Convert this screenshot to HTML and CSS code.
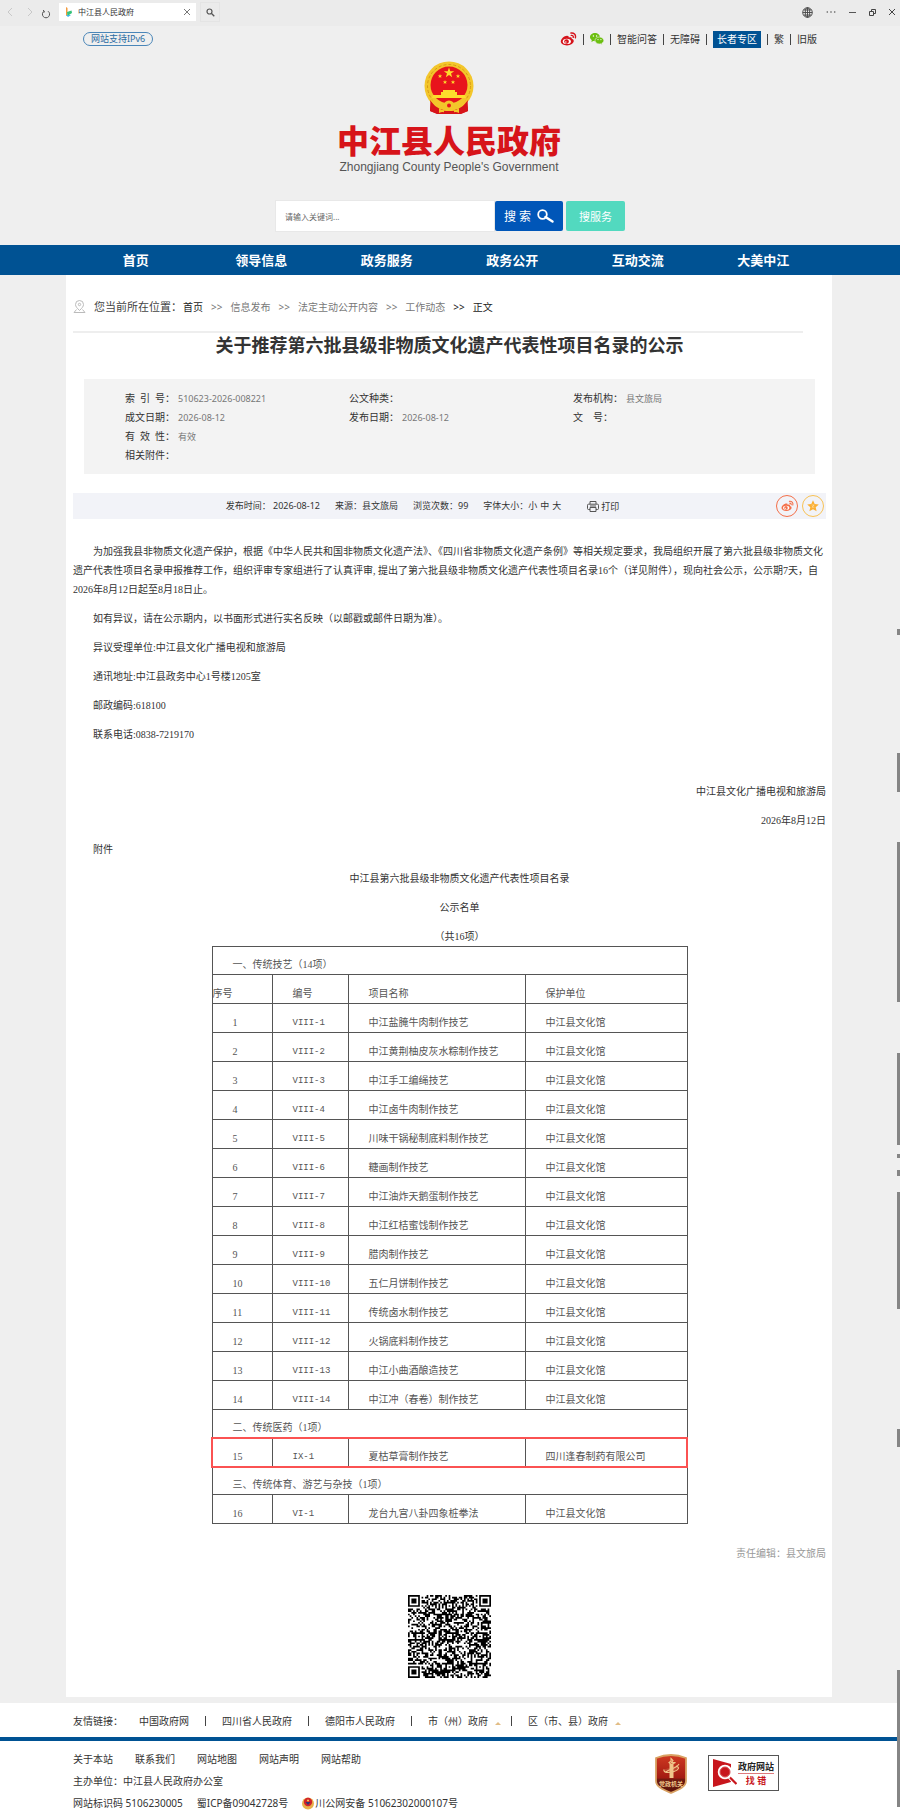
FILE: index.html
```html
<!DOCTYPE html>
<html lang="zh-CN">
<head>
    <meta charset="UTF-8">
    <meta name="viewport" content="width=device-width, initial-scale=1.0">
    <title>中江县人民政府</title>
    <link rel="stylesheet" href="styles.css">
</head>
<body>
    <!-- 公用图标 -->
    <svg class="sprite" aria-hidden="true">
        <symbol id="weibo" viewBox="0 0 24 20">
            <path fill="currentColor" d="M10 5.2C6.500 5 1 9.300 1 13.300 1 17 5.200 19.200 9.800 19.200c5.500 0 9.700-3 9.700-6.200 0-2-1.600-2.800-3-3.200.6-1.800-.3-3.200-4.200-1.800C12.700 6.300 12 5.300 10 5.200z"/>
            <ellipse cx="9.600" cy="13.400" rx="5.800" ry="3.700" fill="#fff"/>
            <circle cx="9.200" cy="13.500" r="3.300" fill="currentColor"/>
            <circle cx="8.200" cy="14.200" r="1" fill="#fff"/>
            <path fill="none" stroke="currentColor" stroke-width="2" stroke-linecap="round" d="M15.500 1.500c4-.8 7.500 2.500 6.300 6.700M16 4.800c2-.3 3.200 1.200 2.800 2.900"/>
        </symbol>
    </svg>

    <div class="browser-bar">
        <button class="bar-btn" aria-label="后退"><svg width="8" height="10" viewBox="0 0 8 10"><path d="M6 1 2 5l4 4" fill="none" stroke="#c8c8c8"/></svg></button>
        <button class="bar-btn" aria-label="前进"><svg width="8" height="10" viewBox="0 0 8 10"><path d="m2 1 4 4-4 4" fill="none" stroke="#c8c8c8"/></svg></button>
        <button class="bar-btn reload" aria-label="刷新"><svg width="10" height="10" viewBox="0 0 10 10"><path d="M3 2.200a3.600 3.600 0 1 0 4 0M2 1.200l1.400 1-.6 1.600" fill="none" stroke="#555"/></svg></button>
        <div class="tab">
            <svg width="8" height="10" viewBox="0 0 8 10"><path d="M1 0 2.500 1v7L1 9z" fill="#f39a3d"/><path d="M2 5 6.500 3.500 7 6 2.500 9z" fill="#35c27a"/><path d="M1 8h5L3 10z" fill="#39b6e8"/></svg>
            <span class="tab-title">中江县人民政府</span>
            <button class="bar-btn" aria-label="关闭标签"><svg width="6" height="6" viewBox="0 0 6 6"><path d="m0 0 6 6M6 0 0 6" stroke="#777"/></svg></button>
        </div>
        <button class="bar-btn tab-search" aria-label="搜索标签"><svg width="9" height="9" viewBox="0 0 9 9"><circle cx="3.500" cy="3.500" r="2.500" fill="none" stroke="#555" stroke-width="1.200"/><path d="m5.300 5.300 3 3" stroke="#555" stroke-width="1.300"/></svg></button>
        <div class="window-btns">
            <button class="bar-btn" aria-label="语言"><svg width="11" height="11" viewBox="0 0 11 11"><g fill="none" stroke="#444" stroke-width=".9"><circle cx="5.500" cy="5.500" r="4.800"/><ellipse cx="5.500" cy="5.500" rx="2.200" ry="4.800"/><path d="M.7 5.500h9.600M1.500 3h8M1.500 8h8M5.500.7v9.600"/></g></svg></button>
            <button class="bar-btn" aria-label="更多"><svg width="10" height="4" viewBox="0 0 10 4"><g fill="#555"><circle cx="1.300" cy="2" r=".8"/><circle cx="5" cy="2" r=".8"/><circle cx="8.700" cy="2" r=".8"/></g></svg></button>
            <button class="bar-btn" aria-label="最小化"><svg width="7" height="7" viewBox="0 0 7 7"><path d="M0 3.500h7" stroke="#555"/></svg></button>
            <button class="bar-btn" aria-label="还原"><svg width="7" height="7" viewBox="0 0 7 7"><path d="M.5 2.500h4v4h-4zM2.500 2V.5h4v4H5" fill="none" stroke="#444"/></svg></button>
            <button class="bar-btn" aria-label="关闭"><svg width="6" height="6" viewBox="0 0 6 6"><path d="m0 0 6 6M6 0 0 6" stroke="#444"/></svg></button>
        </div>
    </div>

    <header class="wrap">
        <div class="top-line">
            <a class="ipv6" href="#">网站支持IPv6</a>
            <div class="top-links">
                <a class="weibo" href="#" aria-label="微博"><svg width="17" height="14"><use href="#weibo"/></svg></a>
                <i></i>
                <a href="#" aria-label="微信"><svg width="14" height="12" viewBox="0 0 14 12"><g fill="#6cbf10"><path d="M5 0C2.200 0 0 1.800 0 4c0 1.300.7 2.400 1.800 3.100L1.400 9l1.900-1c3.800.7 6.600-1.300 6.600-4C9.900 1.800 7.700 0 5 0z"/><path stroke="#efefef" stroke-width=".6" d="M9.300 4C6.900 4 5 5.600 5 7.500S6.900 11 9.300 11l1.200-.2 1.700.9-.4-1.500c1.300-.7 2-1.600 2-2.700C13.800 5.600 11.700 4 9.300 4z"/></g><g fill="#fff"><circle cx="3.400" cy="3" r=".7"/><circle cx="6.600" cy="3" r=".7"/><circle cx="8" cy="6.600" r=".6"/><circle cx="10.900" cy="6.600" r=".6"/></g></svg></a>
                <i></i>
                <a href="#">智能问答</a>
                <i></i>
                <a href="#">无障碍</a>
                <i></i>
                <a class="elder" href="#">长者专区</a>
                <i></i>
                <a href="#">繁</a>
                <i></i>
                <a href="#">旧版</a>
            </div>
        </div>
        <div class="logo">
            <svg width="50" height="54" viewBox="0 0 50 54">
                <path d="M7 38 6 50l7 3h24l7-3-1-12z" fill="#d7141a"/>
                <circle cx="25" cy="25" r="24.500" fill="#f3c62b"/>
                <circle cx="25" cy="25" r="21.500" fill="none" stroke="#d99a15" stroke-width="1" stroke-dasharray="3 2"/>
                <circle cx="25" cy="24" r="18.500" fill="#e8141c"/>
                <path d="m25 6.500 1.300 3.700h3.900L27 12.500l1.200 3.800-3.200-2.300-3.200 2.300 1.200-3.800-3.200-2.300h3.900z" fill="#fddc2c"/>
                <g fill="#fddc2c">
                    <path d="m16 13 .6 1.500h1.600l-1.300 1 .5 1.600-1.400-1-1.400 1 .5-1.600-1.300-1h1.600zM34 13l.6 1.500h1.600l-1.300 1 .5 1.600-1.400-1-1.400 1 .5-1.600-1.300-1h1.600zM21 19l.6 1.500h1.600l-1.300 1 .5 1.600-1.400-1-1.400 1 .5-1.600-1.300-1h1.600zM29 19l.6 1.500h1.600l-1.300 1 .5 1.600-1.400-1-1.400 1 .5-1.600-1.300-1h1.600z"/>
                    <path d="M19 29h12v2h2v3h8l1 3H8l1-3h8v-3h2z"/>
                </g>
                <path d="M6 39c1 3 0 7 0 11l8 3h22l8-3c0-4-1-8 0-11L35 50H15z" fill="#d7141a"/>
                <path d="M10 37c4 7 9 8 15 8s11-1 15-8l2 1c-3 7-8 10-17 10S11 45 8 38z" fill="#f3c62b"/>
                <circle cx="25" cy="45" r="5.500" fill="#f3c62b"/>
                <circle cx="25" cy="44.500" r="2" fill="#e8141c"/>
                <path d="M15 47c3 3 6 2 10 2s7 1 10-2v5c-4-2-6 0-10 0s-6-2-10 0z" fill="#f3c62b"/>
                <path d="M20 51h10" stroke="#d7141a" stroke-width="2"/>
            </svg>
            <h1>中江县人民政府</h1>
            <p>Zhongjiang County People's Government</p>
        </div>
        <form class="search">
            <input type="text" aria-label="关键词" placeholder="请输入关键词...">
            <button type="button" class="search-btn">搜 索
                <svg width="17" height="14" viewBox="0 0 17 14"><circle cx="5.500" cy="5.500" r="4.300" fill="none" stroke="#fff" stroke-width="1.800"/><path d="m8.500 8 7 4.500" stroke="#fff" stroke-width="2.400" stroke-linecap="round"/></svg>
            </button>
            <button type="button" class="service-btn">搜服务</button>
        </form>
    </header>

    <nav class="main-nav">
        <a href="#">首页</a>
        <a href="#">领导信息</a>
        <a href="#">政务服务</a>
        <a href="#">政务公开</a>
        <a href="#">互动交流</a>
        <a href="#">大美中江</a>
    </nav>

    <main class="wrap main">
        <div class="crumb">
            <svg width="13" height="14" viewBox="0 0 13 14"><g fill="none" stroke="#bbb"><path d="M6.500 10.500C4 8 2.500 6.500 2.500 4.500a4 4 0 0 1 8 0c0 2-1.500 3.500-4 6z"/><circle cx="6.500" cy="4.500" r="1.200"/><path d="M3.500 9.500 1 12.500h11l-2.500-3"/></g></svg>
            <span class="crumb-label">您当前所在位置：</span>
            <a class="dark" href="#">首页</a>
            <span>&gt;&gt;</span>
            <a href="#">信息发布</a>
            <span>&gt;&gt;</span>
            <a href="#">法定主动公开内容</a>
            <span>&gt;&gt;</span>
            <a href="#">工作动态</a>
            <span class="dark">&gt;&gt;</span>
            <span class="dark">正文</span>
        </div>
        <h2>关于推荐第六批县级非物质文化遗产代表性项目名录的公示</h2>

        <dl class="meta">
            <div><dt>索&ensp;引&ensp;号：</dt><dd>510623-2026-008221</dd></div>
            <div><dt>公文种类：</dt><dd></dd></div>
            <div><dt>发布机构：</dt><dd>县文旅局</dd></div>
            <div><dt>成文日期：</dt><dd>2026-08-12</dd></div>
            <div><dt>发布日期：</dt><dd>2026-08-12</dd></div>
            <div><dt>文&emsp;号：</dt><dd></dd></div>
            <div class="full"><dt>有&ensp;效&ensp;性：</dt><dd>有效</dd></div>
            <div class="full"><dt>相关附件：</dt><dd></dd></div>
        </dl>

        <div class="tools">
            <div class="tools-info">
                <span>发布时间： 2026-08-12</span>
                <span>来源：县文旅局</span>
                <span>浏览次数：99</span>
                <span class="font-size">字体大小：<a href="#">小</a><a href="#">中</a><a href="#">大</a></span>
                <button class="print"><svg width="12" height="11" viewBox="0 0 12 11"><g fill="none" stroke="#555"><path d="M3 3V.5h6V3M3 8.500H1.500a1 1 0 0 1-1-1V4.200a1 1 0 0 1 1-1h9a1 1 0 0 1 1 1v3.300a1 1 0 0 1-1 1H9"/><path d="M3 6.500h6v4H3zM3 5h6"/></g></svg>打印</button>
            </div>
            <a class="share share-weibo" href="#" aria-label="分享到微博"><svg width="13" height="12"><use href="#weibo"/></svg></a>
            <a class="share share-star" href="#" aria-label="收藏"><svg width="12" height="12" viewBox="0 0 12 12"><path d="m6 .3 1.700 3.800 4.100.4-3.100 2.700.9 4.100L6 9.200l-3.600 2.100.9-4.100L.2 4.500l4.100-.4z" fill="#fbb034"/><path d="M4.500 5h2.700L4.900 7.200h2.500" fill="none" stroke="#fff" stroke-width=".4"/></svg></a>
        </div>

        <article class="article">
            <p>为加强我县非物质文化遗产保护，根据《中华人民共和国非物质文化遗产法》、《四川省非物质文化遗产条例》等相关规定要求，我局组织开展了第六批县级非物质文化遗产代表性项目名录申报推荐工作，组织评审专家组进行了认真评审, 提出了第六批县级非物质文化遗产代表性项目名录16个（详见附件），现向社会公示，公示期7天，自2026年8月12日起至8月18日止。</p>
            <p>如有异议，请在公示期内，以书面形式进行实名反映（以邮戳或邮件日期为准）。</p>
            <p>异议受理单位:中江县文化广播电视和旅游局</p>
            <p>通讯地址:中江县政务中心1号楼1205室</p>
            <p>邮政编码:618100</p>
            <p>联系电话:0838-7219170</p>
            <p class="sign">中江县文化广播电视和旅游局</p>
            <p class="right">2026年8月12日</p>
            <p>附件</p>
            <p class="center">中江县第六批县级非物质文化遗产代表性项目名录</p>
            <p class="center">公示名单</p>
            <p class="center">（共16项）</p>
            <table class="list">
                <colgroup><col class="c-no"><col class="c-code"><col class="c-name"><col class="c-unit"></colgroup>
                <tr class="group"><td colspan="4">一、传统技艺（14项）</td></tr>
                <tr><th class="flush">序号</th><th>编号</th><th>项目名称</th><th>保护单位</th></tr>
                <tr><td>1</td><td class="code">VIII-1</td><td>中江盐腌牛肉制作技艺</td><td>中江县文化馆</td></tr>
                <tr><td>2</td><td class="code">VIII-2</td><td>中江黄荆柚皮灰水粽制作技艺</td><td>中江县文化馆</td></tr>
                <tr><td>3</td><td class="code">VIII-3</td><td>中江手工编绳技艺</td><td>中江县文化馆</td></tr>
                <tr><td>4</td><td class="code">VIII-4</td><td>中江卤牛肉制作技艺</td><td>中江县文化馆</td></tr>
                <tr><td>5</td><td class="code">VIII-5</td><td>川味干锅秘制底料制作技艺</td><td>中江县文化馆</td></tr>
                <tr><td>6</td><td class="code">VIII-6</td><td>糖画制作技艺</td><td>中江县文化馆</td></tr>
                <tr><td>7</td><td class="code">VIII-7</td><td>中江油炸天鹅蛋制作技艺</td><td>中江县文化馆</td></tr>
                <tr><td>8</td><td class="code">VIII-8</td><td>中江红桔蜜饯制作技艺</td><td>中江县文化馆</td></tr>
                <tr><td>9</td><td class="code">VIII-9</td><td>腊肉制作技艺</td><td>中江县文化馆</td></tr>
                <tr><td>10</td><td class="code">VIII-10</td><td>五仁月饼制作技艺</td><td>中江县文化馆</td></tr>
                <tr><td>11</td><td class="code">VIII-11</td><td>传统卤水制作技艺</td><td>中江县文化馆</td></tr>
                <tr><td>12</td><td class="code">VIII-12</td><td>火锅底料制作技艺</td><td>中江县文化馆</td></tr>
                <tr><td>13</td><td class="code">VIII-13</td><td>中江小曲酒酿造技艺</td><td>中江县文化馆</td></tr>
                <tr><td>14</td><td class="code">VIII-14</td><td>中江冲（春卷）制作技艺</td><td>中江县文化馆</td></tr>
                <tr class="group"><td colspan="4">二、传统医药（1项）</td></tr>
                <tr class="marked"><td>15</td><td class="code">IX-1</td><td>夏枯草膏制作技艺</td><td>四川逢春制药有限公司</td></tr>
                <tr class="group"><td colspan="4">三、传统体育、游艺与杂技（1项）</td></tr>
                <tr><td>16</td><td class="code">VI-1</td><td>龙台九宫八卦四象桩拳法</td><td>中江县文化馆</td></tr>
            </table>
        </article>
        <p class="editor">责任编辑：县文旅局</p>
        <svg class="qr" id="qr" viewBox="0 0 49 49" role="img" aria-label="二维码"></svg>
    </main>

    <footer>
        <div class="wrap friend">
            <span>友情链接：</span>
            <a href="#">中国政府网</a><i></i>
            <a href="#">四川省人民政府</a><i></i>
            <a href="#">德阳市人民政府</a><i></i>
            <a class="drop" href="#">市（州）政府</a><i></i>
            <a class="drop" href="#">区（市、县）政府</a>
        </div>
        <div class="foot-line"></div>
        <div class="wrap foot">
            <div class="foot-text">
                <p class="foot-links">
                    <a href="#">关于本站</a>
                    <a href="#">联系我们</a>
                    <a href="#">网站地图</a>
                    <a href="#">网站声明</a>
                    <a href="#">网站帮助</a>
                </p>
                <p>主办单位：中江县人民政府办公室</p>
                <p class="records">
                    <span>网站标识码 5106230005</span>
                    <a href="#">蜀ICP备09042728号</a>
                    <a href="#"><svg width="12" height="13" viewBox="0 0 12 13"><circle cx="6" cy="6.500" r="6" fill="#e8b04a"/><circle cx="6" cy="5" r="4.200" fill="#d2232a"/><path d="M3.500 5h5L6 8z" fill="#2b3a78"/><circle cx="6" cy="3.500" r="1" fill="#fbd34d"/></svg>川公网安备 51062302000107号</a>
                </p>
            </div>
            <a class="shield" href="#">
                <svg width="34" height="40" viewBox="0 0 34 40">
                    <defs><linearGradient id="sh" x2="0" y2="1"><stop stop-color="#d03a22"/><stop offset=".6" stop-color="#a31b12"/><stop offset=".65" stop-color="#6d1a10"/><stop offset="1" stop-color="#5a120b"/></linearGradient></defs>
                    <path d="M17 1c5 0 10 1 15 3v23c0 6-8 9-15 12C10 36 2 33 2 27V4c5-2 10-3 15-3z" fill="url(#sh)" stroke="#d9a263" stroke-width="1.800"/>
                    <path d="M15.500 10h4v14h-4z" fill="#f0c58a"/>
                    <path d="M17 4.500l2 2-1.500 2h4l-4.500 2-2-2 2-1.500zM22 12c4 1 3 4-2 5.500S9 19 10 15.500M25 10c-2 4-9 5-13 8" fill="#f0c58a" stroke="#f0c58a" stroke-width="1.100" fill-opacity=".2"/>
                    <text x="17" y="32" text-anchor="middle" class="shield-text">党政机关</text>
                </svg>
            </a>
            <a class="find-error" href="#">
                <svg width="24" height="28" viewBox="0 0 24 28"><path d="M0 0 18 5v18L0 28z" fill="#c8161d"/><circle cx="12" cy="13" r="6" fill="#c8161d" stroke="#fff" stroke-width="2.500"/><circle cx="12" cy="13" r="5" fill="none" stroke="#c8161d" stroke-width=".8"/><path d="m16.500 18 6.500 7" stroke="#fff" stroke-width="4"/><path d="m17 18.500 6.500 6.500" stroke="#c8161d" stroke-width="2.200"/></svg>
                <span><b>政府网站</b><em>找 错</em></span>
            </a>
        </div>
    </footer>

    <!-- 右侧边缘滚动标记 -->
    <svg class="edge" viewBox="0 0 3 1818" fill="#858585" aria-hidden="true">
        <path d="M0 629h3v6H0zM0 753h3v39H0zM0 842h3v160H0zM0 1053h3v92H0zM0 1154h3v4H0zM0 1170h3v6H0zM0 1192h3v117H0zM0 1429h3v18H0zM0 1670h3v137H0z"/>
    </svg>

    <script src="script.js"></script>
</body>
</html>
```
FILE: styles.css
```css
* {
    margin: 0;
    padding: 0;
    box-sizing: border-box;
}
body {
    position: relative;
    background: #efefef;
    color: #333;
    font-family: "Noto Sans", "Noto Sans CJK SC", sans-serif;
    font-size: 10px;
    line-height: 20px;
}
a {
    color: inherit;
    text-decoration: none;
}
button {
    border: none;
    background: none;
    font-family: inherit;
    cursor: pointer;
}
svg {
    display: block;
    flex: none;
}
.sprite {
    position: absolute;
    width: 0;
    height: 0;
}
.wrap {
    margin: 0 68px 0 66px;
}

/* 浏览器栏 */
.browser-bar {
    display: flex;
    align-items: center;
    height: 26px;
    padding: 0 5px 2px 6px;
    background: #ebebeb;
}
.bar-btn {
    display: flex;
    align-items: center;
    justify-content: center;
    margin-right: 12px;
}
.reload {
    margin: 3px 8px 0 -5px;
}
.tab {
    display: flex;
    align-items: center;
    width: 137px;
    height: 18px;
    padding: 0 6px;
    background: #fff;
}
.tab-title {
    flex: 1;
    margin-left: 5px;
    font-size: 8px;
    line-height: 18px;
}
.tab .bar-btn {
    margin: 0;
}
.tab-search {
    width: 20px;
    height: 20px;
    margin: 0 0 0 4px;
    border: 1px solid #e4e4e4;
}
.window-btns {
    display: flex;
    align-items: center;
    gap: 13px;
    margin-left: auto;
}
.window-btns .bar-btn {
    margin: 0;
}

/* 页头 */
.top-line {
    display: flex;
    align-items: center;
    justify-content: space-between;
    height: 26px;
    padding: 0 15px 0 17px;
}
.ipv6 {
    padding: 0 7px;
    border: 1px solid #4a86b8;
    border-radius: 8px;
    color: #2b6ca3;
    font-size: 9px;
    line-height: 12px;
}
.top-links {
    display: flex;
    align-items: center;
    gap: 6px;
}
.top-links i,
.friend i {
    width: 1px;
    height: 11px;
    background: #444;
}
.weibo {
    color: #d5131b;
}
.elder {
    padding: 0 4px;
    background: #005293;
    color: #fff;
    line-height: 17px;
}
.logo {
    display: flex;
    flex-direction: column;
    align-items: center;
    padding-top: 9px;
}
.logo h1 {
    margin-top: 9px;
    color: #d7141a;
    font-size: 32px;
    font-weight: 900;
    line-height: 34px;
}
.logo p {
    margin-top: 1px;
    color: #555;
    font-family: "Liberation Sans", sans-serif;
    font-size: 12px;
    line-height: 16px;
}
.search {
    display: flex;
    align-items: center;
    justify-content: center;
    padding: 25px 0 13px 2px;
}
.search input {
    width: 220px;
    height: 32px;
    padding: 0 9px;
    border: 1px solid #e8e8e8;
    background: #fff;
    font-family: inherit;
    font-size: 8px;
}
.search input::placeholder {
    color: #666;
}
.search-btn,
.service-btn {
    display: flex;
    align-items: center;
    justify-content: center;
    height: 30px;
    border-radius: 2px;
    color: #fff;
}
.search-btn {
    gap: 6px;
    width: 68px;
    background: #0056b8;
    font-size: 12px;
}
.service-btn {
    width: 59px;
    margin-left: 3px;
    background: #52d9bf;
    font-size: 11px;
}
.main-nav {
    display: flex;
    height: 30px;
    padding: 0 74px 0 73px;
    background: #005293;
}
.main-nav a {
    flex: 1;
    color: #fff;
    font-size: 13px;
    font-weight: bold;
    line-height: 31px;
    text-align: center;
}

/* 正文 */
.main {
    padding: 22px 6px 19px 7px;
    background: #fff;
}
.crumb {
    display: flex;
    align-items: center;
    gap: 8px;
    height: 36px;
    margin-right: 23px;
    padding-bottom: 14px;
    border-bottom: 2px solid #eee;
    color: #777;
}
.crumb-label {
    margin-right: -7px;
    color: #444;
    font-size: 11px;
}
.crumb .dark {
    color: #222;
}
.main h2 {
    font-size: 18px;
    line-height: 24px;
    text-align: center;
}
.meta {
    display: grid;
    grid-template-columns: repeat(3, 1fr);
    margin: 22px 11px 0;
    padding: 10px 18px 9px 41px;
    background: #f3f3f3;
    line-height: 19px;
}
.meta div {
    display: flex;
}
.meta .full {
    grid-column: 1 / -1;
}
.meta dd {
    margin-left: 3px;
    color: #777;
    font-size: 9px;
}
.tools {
    display: flex;
    align-items: center;
    gap: 4px;
    height: 26px;
    margin-top: 19px;
    padding-right: 2px;
    background: #f2f3f8;
    font-size: 9px;
}
.tools-info {
    display: flex;
    flex: 1;
    justify-content: center;
    gap: 15px;
}
.font-size a {
    margin-right: 3px;
}
.print {
    display: flex;
    align-items: center;
    gap: 2px;
    margin-left: 8px;
    color: #333;
    font-size: 9px;
}
.share {
    display: flex;
    align-items: center;
    justify-content: center;
    width: 22px;
    height: 22px;
    border: 1px solid;
    border-radius: 50%;
}
.share-weibo {
    color: #f4704a;
}
.share-star {
    color: #f8c255;
}
.article {
    margin-top: 23px;
    font-family: "Liberation Serif", "Noto Sans CJK SC", serif;
    line-height: 19px;
}
.article p {
    margin-bottom: 10px;
    text-indent: 2em;
}
.article .sign,
.article .right {
    text-align: right;
}
.article .sign {
    margin-top: 38px;
}
.article .center {
    text-align: center;
    text-indent: 20px;
}
.article .center:last-of-type {
    margin-bottom: 0;
}
.list {
    width: 476px;
    margin: 0 auto;
    border-collapse: collapse;
    table-layout: fixed;
    color: #555;
    line-height: 18px;
}
.c-no {
    width: 60px;
}
.c-code {
    width: 76px;
}
.c-name {
    width: 177px;
}
.list td,
.list th {
    padding: 10px 0 0 20px;
    border: 1px solid #555;
    font-weight: normal;
    text-align: left;
}
.list .group td {
    padding-top: 9px;
}
.list .flush {
    padding-left: 0;
}
.list .code {
    font-family: "Liberation Mono", monospace;
    font-size: 9px;
}
.marked {
    outline: 2px solid #fb5252;
    outline-offset: -1px;
}
.editor {
    margin-top: 19px;
    color: #999;
    text-align: right;
}
.qr {
    width: 83px;
    height: 83px;
    margin: 32px auto 0;
}

/* 页脚 */
footer {
    margin-top: 6px;
    background: #fff;
}
.friend {
    display: flex;
    align-items: center;
    gap: 16px;
    height: 34px;
    padding: 2px 7px 0;
}
.friend i {
    height: 10px;
}
.drop::after {
    content: "";
    display: inline-block;
    margin: 0 -6px 0 7px;
    border: 3px solid transparent;
    border-top: none;
    border-bottom-color: #e2bd85;
}
.foot-line {
    height: 4px;
    background: #005293;
}
.foot {
    display: flex;
    align-items: flex-start;
    padding: 7px 53px 5px 7px;
}
.foot-text {
    flex: 1;
    line-height: 22px;
}
.foot-links {
    display: flex;
    gap: 22px;
}
.records {
    display: flex;
    gap: 14px;
}
.records a {
    display: flex;
    align-items: center;
    gap: 1px;
}
.shield {
    margin: 6px 20px 0 0;
}
.shield-text {
    fill: #f0c58a;
    font-size: 6px;
    font-weight: bold;
}
.find-error {
    display: flex;
    align-items: center;
    gap: 1px;
    height: 36px;
    margin-top: 7px;
    padding: 0 4px;
    border: 1px solid #555;
    font-size: 9px;
    line-height: 13px;
    text-align: center;
}
.find-error b {
    display: block;
    border-bottom: 1px solid #dd7a7d;
    color: #222;
}
.find-error em {
    color: #c8161d;
    font-style: normal;
    font-weight: bold;
}
.edge {
    position: absolute;
    top: 0;
    right: 0;
    width: 3px;
    height: 1818px;
}
```
FILE: script.js
```js
// 绘制二维码
const size = 49;
const spots = [6, 24, 42];
let seed = 20260812;

function random() {
    seed = (seed * 1103515245 + 12345) % 2147483648;
    return seed / 2147483648;
}

function isDark(x, y) {
    // 三个定位角
    const fx = x > 40 ? size - 1 - x : x;
    const fy = y > 40 ? size - 1 - y : y;
    if (fx < 8 && fy < 8 && !(x > 40 && y > 40)) {
        const d = Math.max(Math.abs(fx - 3), Math.abs(fy - 3));
        return d === 3 || d < 2;
    }
    // 校正点
    for (const cx of spots) {
        for (const cy of spots) {
            const d = Math.max(Math.abs(x - cx), Math.abs(y - cy));
            const corner = (cx === 6 && cy !== 24) || (cy === 6 && cx === 42);
            if (d < 3 && !corner) {
                return d !== 1;
            }
        }
    }
    if (x === 6 || y === 6) {
        return (x + y) % 2 === 0;
    }
    return random() < 0.52;
}

let path = '';
for (let y = 0; y < size; y++) {
    for (let x = 0; x < size; x++) {
        if (isDark(x, y)) {
            path += `M${x} ${y}h1v1h-1z`;
        }
    }
}
document.getElementById('qr').innerHTML = `<path d="${path}"/>`;
```
